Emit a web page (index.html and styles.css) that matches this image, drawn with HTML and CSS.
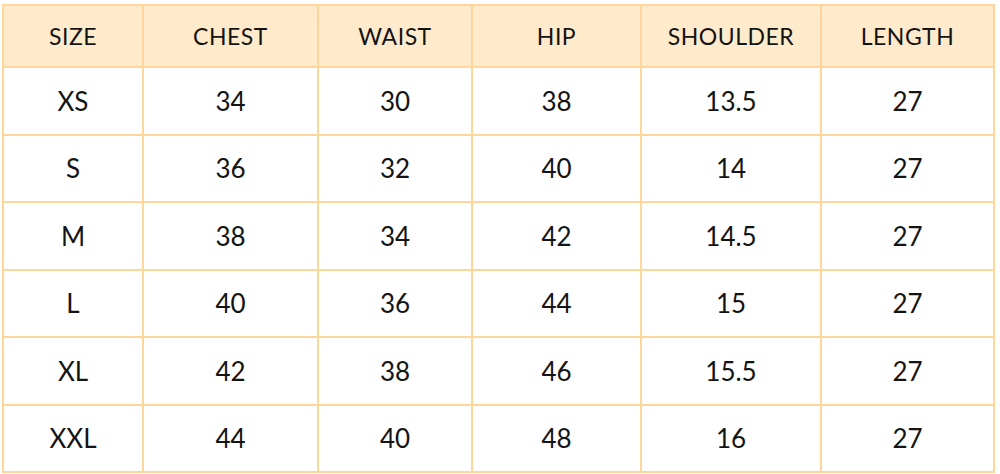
FILE: index.html
```html
<!DOCTYPE html>
<html>
<head>
<meta charset="utf-8">
<link rel="stylesheet" href="styles.css">
</head>
<body>
<table class="size-table">
  <colgroup>
    <col class="c1"><col class="c2"><col class="c3"><col class="c4"><col class="c5"><col class="c6">
  </colgroup>
  <thead>
    <tr class="head-row"><th>SIZE</th><th>CHEST</th><th>WAIST</th><th>HIP</th><th>SHOULDER</th><th>LENGTH</th></tr>
  </thead>
  <tbody>
    <tr><td>XS</td><td>34</td><td>30</td><td>38</td><td>13.5</td><td>27</td></tr>
    <tr><td>S</td><td>36</td><td>32</td><td>40</td><td>14</td><td>27</td></tr>
    <tr><td>M</td><td>38</td><td>34</td><td>42</td><td>14.5</td><td>27</td></tr>
    <tr><td>L</td><td>40</td><td>36</td><td>44</td><td>15</td><td>27</td></tr>
    <tr><td>XL</td><td>42</td><td>38</td><td>46</td><td>15.5</td><td>27</td></tr>
    <tr><td>XXL</td><td>44</td><td>40</td><td>48</td><td>16</td><td>27</td></tr>
  </tbody>
</table>
</body>
</html>
```
FILE: styles.css
```css
html, body {
  margin: 0;
  padding: 0;
  background: #ffffff;
}
body {
  padding: 4px 0 0 2px;
  font-family: "Lato", "Open Sans", sans-serif;
  color: #141414;
}
.size-table {
  border-collapse: collapse;
  table-layout: fixed;
  width: 993px;
}
.c1 { width: 140px; }
.c2 { width: 175px; }
.c3 { width: 154px; }
.c4 { width: 169px; }
.c5 { width: 180px; }
.c6 { width: 173px; }
.size-table th,
.size-table td {
  border: 2px solid #ffd699;
  text-align: center;
  padding: 0;
}
.size-table th {
  background: #ffebcc;
  font-weight: 400;
  font-size: 23px;
  height: 60px;
  letter-spacing: 0.5px;
}
.size-table td {
  font-size: 26px;
  height: 65.5px;
}
```
